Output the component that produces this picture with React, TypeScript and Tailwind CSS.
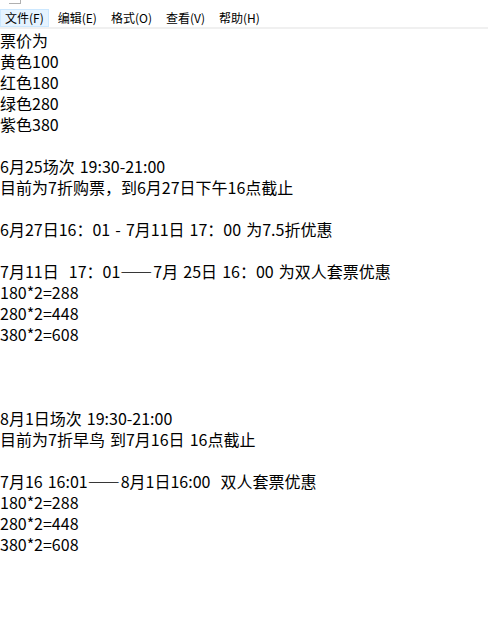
import React from 'react';

const menus = ['文件(F)', '编辑(E)', '格式(O)', '查看(V)', '帮助(H)'];

const lines = [
  '票价为',
  '黄色100',
  '红色180',
  '绿色280',
  '紫色380',
  '',
  '6月25场次 19:30-21:00',
  '目前为7折购票，到6月27日下午16点截止',
  '',
  '6月27日16：01 - 7月11日 17：00 为7.5折优惠',
  '',
  '7月11日  17：01——7月 25日 16：00 为双人套票优惠',
  '180*2=288',
  '280*2=448',
  '380*2=608',
  '',
  '',
  '',
  '8月1日场次 19:30-21:00',
  '目前为7折早鸟 到7月16日 16点截止',
  '',
  '7月16 16:01——8月1日16:00  双人套票优惠',
  '180*2=288',
  '280*2=448',
  '380*2=608',
];

// em dashes drawn full width like the YaHei originals
function Line({ text }: { text: string }) {
  const parts = text.split('——');
  return (
    <>
      {parts.map((p, i) => (
        <React.Fragment key={i}>
          {p}
          {i < parts.length - 1 && (
            <span className="inline-block w-[33px] [font-feature-settings:'fwid'] tracking-[2px]">——</span>
          )}
        </React.Fragment>
      ))}
    </>
  );
}

export default function App() {
  return (
    <div
      className="w-[488px] h-[641px] bg-white overflow-hidden"
      style={{ fontFamily: '"Noto Sans CJK SC", "Noto Sans", sans-serif' }}
    >
      {/* title bar remnant */}
      <div className="h-[9px] relative">
        <div className="absolute left-[9px] top-0 w-[12px] h-[4px] border-r border-b border-[#b0b0b0]" />
      </div>

      {/* menu bar */}
      <div className="flex h-[20px] items-stretch border-b-2 border-[#f0f0f0] text-[12px] text-black">
        {menus.map((m, i) => (
          <div
            key={m}
            className={`flex items-center px-[4px] mr-[4px] ${
              i === 0 ? 'bg-[#e5f3ff] border border-[#cce8ff]' : 'border border-transparent'
            }`}
          >
            {m}
          </div>
        ))}
      </div>

      {/* editor */}
      <div className="text-[16px] leading-[21px] text-black whitespace-pre pt-[1px] [word-spacing:1.5px]">
        {lines.map((l, i) => (
          <div key={i} className="h-[21px]">
            <Line text={l} />
          </div>
        ))}
      </div>
    </div>
  );
}
